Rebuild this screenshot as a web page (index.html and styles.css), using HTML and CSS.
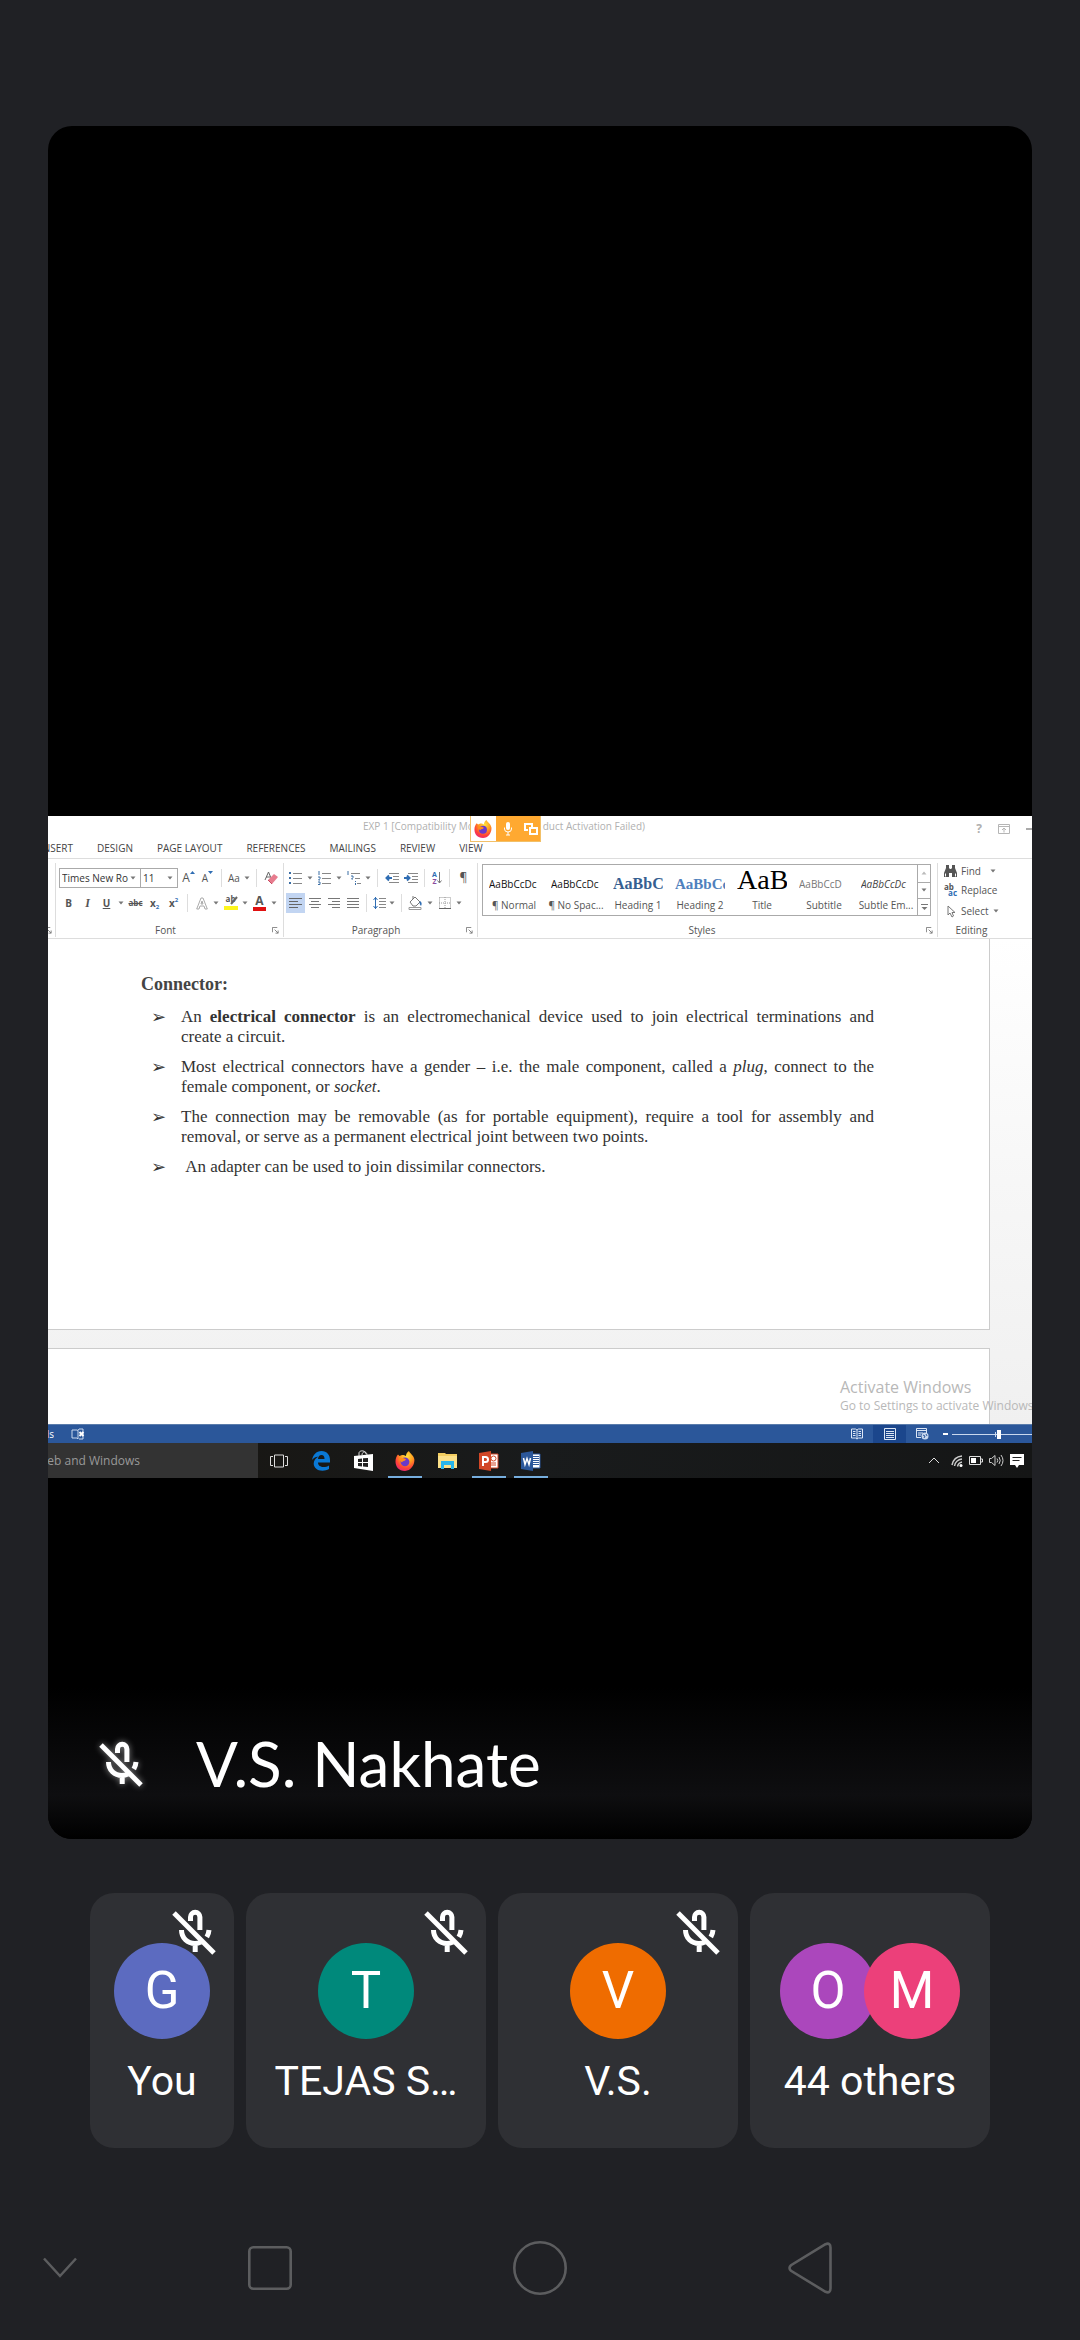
FILE: index.html
```html
<!DOCTYPE html>
<html lang="en">
<head>
<meta charset="utf-8">
<meta name="viewport" content="width=device-width, initial-scale=1">
<title>Meeting</title>
<link rel="stylesheet" href="styles.css">
</head>
<body>
<svg class="sprite" aria-hidden="true">
  <defs>
    <radialGradient id="fox" cx="0.6" cy="0.25" r="0.85"><stop offset="0" stop-color="#ffe23c"/><stop offset="0.4" stop-color="#ff9a1f"/><stop offset="0.72" stop-color="#ff4138"/><stop offset="1" stop-color="#e0208a"/></radialGradient>
  </defs>
  <symbol id="mic-off" viewBox="0 0 44 46">
    <g fill="none" stroke="currentColor" stroke-width="5">
      <path d="M2 4 42 44"/>
      <path d="M18.500 12V8a4.700 4.700 0 0 1 9.400 0V21"/>
      <path d="M9.500 21C9.500 29 15.500 34.500 23 34.500c2 0 4-.5 6-1.500M37 21c-.2 2.500-1 5-2.200 7M23.200 34v9"/>
    </g>
  </symbol>
  <symbol id="caret" viewBox="0 0 6 4"><path d="M0.500 0.500h5l-2.500 3z" fill="#777"/></symbol>
  <symbol id="launch" viewBox="0 0 8 8"><path d="M.5 6V.5H6M3 3l4 4M7 4v3H4" fill="none" stroke="#777"/></symbol>
  <symbol id="firefox" viewBox="0 0 20 20">
    <path d="M3 3.500 4.500 5 7 4c2 0 3 .5 4 1 0-2 1-4 3-5 .3 2 4.500 4 5.300 8 .8 5-3 12-9.300 12S.5 15.500.5 10.500C.5 7.500 1.500 5 3 3.500z" fill="url(#fox)"/>
    <circle cx="10" cy="10.800" r="4.400" fill="#6b39c9"/>
    <path d="M4 7.500c3-1.500 5 0 7 1-1 2-3.500 1-4 3-1-1-2.500-2-3-4z" fill="#ff8a1c"/>
  </symbol>
  <symbol id="lines-left" viewBox="0 0 14 12"><path d="M0 1.500h13M0 4.500h9M0 7.500h13M0 10.500h9" stroke="#666" fill="none"/></symbol>
  <symbol id="lines-center" viewBox="0 0 14 12"><path d="M1 1.500h12M3 4.500h8M1 7.500h12M3 10.500h8" stroke="#777" fill="none"/></symbol>
  <symbol id="lines-right" viewBox="0 0 14 12"><path d="M1 1.500h12M5 4.500h8M1 7.500h12M5 10.500h8" stroke="#777" fill="none"/></symbol>
  <symbol id="lines-full" viewBox="0 0 14 12"><path d="M1 1.500h12M1 4.500h12M1 7.500h12M1 10.500h12" stroke="#777" fill="none"/></symbol>
  <symbol id="bullets" viewBox="0 0 14 14"><path d="M0 2h2M0 7h2M0 12h2" stroke="#3b6ea5" stroke-width="2"/><path d="M4 2.500h9M4 7.500h9M4 12.500h9" stroke="#888"/></symbol>
  <symbol id="numbers" viewBox="0 0 14 14"><path d="M1 0v4M0 6h2v1.500L.5 9H2M0 11h2v2.500H0" stroke="#3b6ea5" fill="none"/><path d="M4 2.500h9M4 7.500h9M4 12.500h9" stroke="#888"/></symbol>
  <symbol id="levels" viewBox="0 0 14 14"><path d="M1 0v4M4 5h2v1.500L4.500 8H6M8.500 10v1m0 1v2" stroke="#3b6ea5" fill="none"/><path d="M4 2.500h9M8 7.500h5M10 12.500h4" stroke="#888"/></symbol>
  <symbol id="outdent" viewBox="0 0 14 12"><path d="M4 1.500h10M8 4.500h6M8 7.500h6M4 10.500h10" stroke="#888"/><path d="M7 6H2M4 3.500 1.500 6 4 8.500" stroke="#2f6db3" stroke-width="2" fill="none"/></symbol>
  <symbol id="indent" viewBox="0 0 14 12"><path d="M4 1.500h10M8 4.500h6M8 7.500h6M4 10.500h10" stroke="#888"/><path d="M0 6h5M3 3.500 5.500 6 3 8.500" stroke="#2f6db3" stroke-width="2" fill="none"/></symbol>
</svg>

<main class="stage">
  <section class="share" aria-label="Shared screen">
    <header class="titlebar">
      <div class="title-text">
        <span>EXP 1 [Compatibility Mo</span>
        <div class="sharing">
          <span class="sharing-app"><svg width="18" height="18"><use href="#firefox"/></svg></span>
          <svg class="sharing-mic" width="8" height="14" viewBox="0 0 8 14"><rect x="2" y="0" width="4" height="8" rx="2" fill="#fff"/><path d="M.5 5.500v1.500a3.500 3 0 0 0 7 0V5.500M4 10v3M2 13h4" stroke="#fff" fill="none"/></svg>
          <svg class="sharing-screen" width="14" height="12" viewBox="0 0 14 12"><path d="M4 7H1V1h7v3M6 5h7v6H6z" fill="none" stroke="#fff" stroke-width="2"/></svg>
        </div>
        <span>duct Activation Failed)</span>
      </div>
      <div class="window-tools">
        <button aria-label="Help">?</button>
        <button aria-label="Ribbon display options"><svg width="12" height="10" viewBox="0 0 12 10"><path d="M.5.5h11v9H.5zM.5 2.500h11M6 8.500V4.500M4 6l2-2 2 2" fill="none" stroke="#b5b5b5"/></svg></button>
        <button aria-label="Minimize"><svg width="12" height="2"><path d="M0 1h12" stroke="#aaa" stroke-width="2"/></svg></button>
      </div>
    </header>

    <nav class="tabs">
      <button>INSERT</button><button>DESIGN</button><button>PAGE LAYOUT</button><button>REFERENCES</button><button>MAILINGS</button><button>REVIEW</button><button>VIEW</button>
    </nav>

    <div class="ribbon">
      <div class="group"><div class="group-name"><svg class="launch" width="7" height="7"><use href="#launch"/></svg></div></div>

      <div class="group font-group">
        <div class="tools">
          <label class="picker picker-font"><select aria-label="Font"><option>Times New Ro</option></select><svg width="6" height="4"><use href="#caret"/></svg></label>
          <label class="picker picker-size"><select aria-label="Font size"><option>11</option></select><svg width="6" height="4"><use href="#caret"/></svg></label>
          <button class="tool grow" aria-label="Grow font">A<svg width="5" height="3" viewBox="0 0 5 3"><path d="M0 3 2.500 0 5 3z" fill="#2f6db3"/></svg></button>
          <button class="tool shrink" aria-label="Shrink font">A<svg width="5" height="3" viewBox="0 0 5 3"><path d="M0 0h5L2.500 3z" fill="#2f6db3"/></svg></button>
          <i class="sep"></i>
          <button class="tool narrow">Aa</button><button class="drop" aria-label="Case"><svg width="6" height="4"><use href="#caret"/></svg></button>
          <i class="sep"></i>
          <button class="tool" aria-label="Clear formatting"><svg width="14" height="14" viewBox="0 0 14 14"><path d="M1 9 4.500 1 7 7M2 6h4" stroke="#666" fill="none"/><path d="M4 9 10 3l4 3-6 7z" fill="#e77c8e"/><path d="M4 9l4 4" stroke="#c9485f"/></svg></button>
        </div>
        <div class="tools">
          <button class="tool bold">B</button><button class="tool italic">I</button><button class="tool under">U</button><button class="drop" aria-label="Underline style"><svg width="6" height="4"><use href="#caret"/></svg></button>
          <button class="tool strike">abc</button><button class="tool bold">x<sub>2</sub></button><button class="tool bold">x<sup>2</sup></button>
          <i class="sep"></i>
          <button class="tool" aria-label="Text effects"><svg width="12" height="13" viewBox="0 0 12 13"><path d="M.7 12 5 1h2l4.300 11H9L8 9H4l-1 3zM5 7h2L6 4z" fill="none" stroke="#aaa"/></svg></button><button class="drop" aria-label="Effects list"><svg width="6" height="4"><use href="#caret"/></svg></button>
          <button class="tool mark-yellow" aria-label="Highlight"><span>ab</span><svg width="14" height="14" viewBox="0 0 14 14"><path d="M13 1 7 8" stroke="#666" stroke-width="2"/><path d="M0 10h14v4H0z" fill="#fdf51c"/></svg></button><button class="drop" aria-label="Highlight colour"><svg width="6" height="4"><use href="#caret"/></svg></button>
          <button class="tool mark-red">A</button><button class="drop" aria-label="Font colour"><svg width="6" height="4"><use href="#caret"/></svg></button>
        </div>
        <div class="group-name"><span>Font</span><svg class="launch" width="7" height="7"><use href="#launch"/></svg></div>
      </div>

      <div class="group para-group">
        <div class="tools">
          <button class="tool" aria-label="Bullets"><svg width="14" height="14"><use href="#bullets"/></svg></button><button class="drop" aria-label="Bullet list"><svg width="6" height="4"><use href="#caret"/></svg></button>
          <button class="tool" aria-label="Numbering"><svg width="14" height="14"><use href="#numbers"/></svg></button><button class="drop" aria-label="Number list"><svg width="6" height="4"><use href="#caret"/></svg></button>
          <button class="tool" aria-label="Multilevel"><svg width="14" height="14"><use href="#levels"/></svg></button><button class="drop" aria-label="Level list"><svg width="6" height="4"><use href="#caret"/></svg></button>
          <i class="sep"></i>
          <button class="tool" aria-label="Decrease indent"><svg width="14" height="12"><use href="#outdent"/></svg></button>
          <button class="tool" aria-label="Increase indent"><svg width="14" height="12"><use href="#indent"/></svg></button>
          <i class="sep"></i>
          <button class="tool narrow sort" aria-label="Sort"><span><b>A</b><b>Z</b></span><svg width="5" height="12" viewBox="0 0 5 12"><path d="M2.500 0v11M.5 8.500l2 2.500 2-2.500" stroke="#777" fill="none"/></svg></button>
          <i class="sep"></i>
          <button class="tool pilcrow">¶</button>
        </div>
        <div class="tools">
          <button class="tool active" aria-label="Align left"><svg width="14" height="12"><use href="#lines-left"/></svg></button>
          <button class="tool" aria-label="Centre"><svg width="14" height="12"><use href="#lines-center"/></svg></button>
          <button class="tool" aria-label="Align right"><svg width="14" height="12"><use href="#lines-right"/></svg></button>
          <button class="tool" aria-label="Justify"><svg width="14" height="12"><use href="#lines-full"/></svg></button>
          <i class="sep"></i>
          <button class="tool narrow" aria-label="Line spacing"><svg width="13" height="14" viewBox="0 0 13 14"><path d="M2.500 1v12M.5 4l2-2.500 2 2.500M.5 10l2 2.500 2-2.500" stroke="#2f6db3" fill="none"/><path d="M6 2.500h7M6 5.500h7M6 8.500h7M6 11.500h7" stroke="#888"/></svg></button><button class="drop" aria-label="Spacing list"><svg width="6" height="4"><use href="#caret"/></svg></button>
          <i class="sep"></i>
          <button class="tool" aria-label="Shading"><svg width="15" height="14" viewBox="0 0 15 14"><path d="M2 6 7 1l5 5-4 4H5zM5 3V0" stroke="#777" fill="none"/><path d="M12 5c2 1 2 3 1 5-1-1-2-3-1-5z" fill="#2f6db3"/><path d="M1 11.500h12v2H1z" fill="#fff" stroke="#999"/></svg></button><button class="drop" aria-label="Shading colour"><svg width="6" height="4"><use href="#caret"/></svg></button>
          <button class="tool" aria-label="Borders"><svg width="12" height="12" viewBox="0 0 12 12"><path d="M.5.5h11v11M.5.5v11M6 0v11M0 6h12" fill="none" stroke="#999" stroke-dasharray="1 1"/><path d="M0 11.500h12" stroke="#666"/></svg></button><button class="drop" aria-label="Border list"><svg width="6" height="4"><use href="#caret"/></svg></button>
        </div>
        <div class="group-name"><span>Paragraph</span><svg class="launch" width="7" height="7"><use href="#launch"/></svg></div>
      </div>

      <div class="group styles-group">
        <div class="gallery">
          <button class="style"><span class="sample">AaBbCcDc</span><span>¶ Normal</span></button>
          <button class="style"><span class="sample">AaBbCcDc</span><span>¶ No Spac...</span></button>
          <button class="style"><span class="sample heading dark">AaBbCc</span><span>Heading 1</span></button>
          <button class="style"><span class="sample heading small light">AaBbCc</span><span>Heading 2</span></button>
          <button class="style"><span class="sample display">AaB</span><span>Title</span></button>
          <button class="style"><span class="sample spaced">AaBbCcD</span><span>Subtitle</span></button>
          <button class="style"><span class="sample slanted">AaBbCcDc</span><span>Subtle Em...</span></button>
          <div class="scroller">
            <button aria-label="Up"><svg width="6" height="4" viewBox="0 0 6 4"><path d="M.5 3.500h5L3 .5z" fill="#bbb"/></svg></button>
            <button aria-label="Down"><svg width="6" height="4"><use href="#caret"/></svg></button>
            <button aria-label="More"><svg width="7" height="7" viewBox="0 0 7 7"><path d="M0 .5h7" stroke="#777"/><path d="M.5 3h6l-3 3z" fill="#777"/></svg></button>
          </div>
        </div>
        <div class="group-name"><span>Styles</span><svg class="launch" width="7" height="7"><use href="#launch"/></svg></div>
      </div>

      <div class="group edit-group">
        <button class="edit"><svg width="13" height="12" viewBox="0 0 13 12"><path d="M2 3V0h3v3l1 1h1l1-1V0h3v3l2 5v4H8V8H5v4H0V8z" fill="#555"/><path d="M1.500 8.500v3M11.500 8.500v3" stroke="#fff"/></svg><span>Find</span><svg class="end" width="6" height="4"><use href="#caret"/></svg></button>
        <button class="edit"><span class="swap"><b>ab</b><b>ac</b></span><span>Replace</span></button>
        <button class="edit"><svg width="13" height="13" viewBox="0 0 13 13"><path d="M4 1v9l2-2 2 4 1.500-1L8 7.500h3z" fill="#fff" stroke="#777"/></svg><span>Select</span><svg width="6" height="4"><use href="#caret"/></svg></button>
        <div class="group-name"><span>Editing</span></div>
      </div>
    </div>

    <div class="canvas">
      <article class="page first">
        <h1>Connector:</h1>
        <ul>
          <li>An <b>electrical connector</b> is an electromechanical device used to join electrical terminations and create&nbsp;a&nbsp;circuit.</li>
          <li>Most electrical connectors have a gender – i.e. the male component, called a <em>plug</em>, connect to the female component, or <em>socket</em>.</li>
          <li>The connection may be removable (as for portable equipment), require a tool for assembly and removal, or serve as a permanent electrical joint between two points.</li>
          <li>&nbsp;An adapter can be used to join dissimilar connectors.</li>
        </ul>
      </article>
      <article class="page second"></article>
      <div class="watermark"><p class="wm-title">Activate Windows</p><p>Go to Settings to activate Windows.</p></div>
    </div>

    <div class="status">
      <span class="words"><span>words</span></span>
      <svg width="14" height="12" viewBox="0 0 14 12"><path d="M6 2H1v8h5l1 1V2.500zM7 2.500 8 1h4v10H8" fill="none" stroke="#c9d8ee"/><path d="M8.500 4l4 4M12.500 4l-4 4" stroke="#fff" stroke-width="2"/></svg>
      <div class="views">
        <button aria-label="Read mode"><svg width="12" height="12" viewBox="0 0 12 12"><path d="M.5 1h4L6 2l1.500-1h4v9h-4L6 11l-1.500-1h-4zM6 2v9M2 3.500h2.500M2 5.500h2.500M2 7.500h2.500M7.500 3.500H10M7.500 5.500H10M7.500 7.500H10" fill="none" stroke="#dce6f5"/></svg></button>
        <button class="active" aria-label="Print layout"><svg width="12" height="12" viewBox="0 0 12 12"><path d="M.5.5h11v11H.5zM2 3.500h8M2 5.500h8M2 7.500h8M2 9.500h8" fill="none" stroke="#dce6f5"/></svg></button>
        <button aria-label="Web layout"><svg width="13" height="12" viewBox="0 0 13 12"><path d="M5 9.500H.5v-9h10V5M.5 2.500h10M2 5h5M2 7h3" fill="none" stroke="#dce6f5"/><circle cx="9" cy="8" r="3.500" fill="#c9d8ee"/><path d="M7 7l2 1-1 2M10 6l1 2" stroke="#2b579a" fill="none"/></svg></button>
      </div>
      <svg class="zoom-out" width="5" height="2"><path d="M0 1h5" stroke="#fff" stroke-width="2"/></svg>
      <svg class="zoom-track" width="80" height="11" viewBox="0 0 80 11"><path d="M0 5.500h80M43.500 3v5" stroke="#c9d8ee" fill="none"/><path d="M45 1h4v9h-4z" fill="#fff"/></svg>
    </div>

    <div class="taskbar">
      <input class="search" type="text" aria-label="Search" value="Search the web and Windows">
      <div class="apps">
        <button aria-label="Task view"><svg width="18" height="14" viewBox="0 0 18 14"><path d="M4.500 1h9v12h-9zM3 2.500H.5v9H3M15 2.500h2.500v9H15" fill="none" stroke="#ddd"/></svg></button>
        <button aria-label="Edge"><svg width="18" height="20" viewBox="0 0 18 20"><path d="M0 9C1 4 4 0 9.500 0 15 0 18 4 18 9v2.500H6c0 3 2.500 4.500 5.500 4.500 2 0 4-.5 5.500-1.500V18c-2 1.300-4 1.700-6.500 1.700C5 19.700 1.700 16.500 1.700 12.500c0-3 2-5.500 4.500-6.800C3.500 5.500 1.500 7 0 9zm6-1h6.500c0-2.500-1-4-3-4S6.300 5.500 6 8z" fill="#0a78d4"/></svg></button>
        <button aria-label="Store"><svg width="19" height="21" viewBox="0 0 19 21"><path d="M0 6 19 4v17L0 18z" fill="#fff"/><path d="M5 6V3c0-3 7-3 7 1M8 5c0-4 5-4 5 0" fill="none" stroke="#ddd"/><path d="M4 9l4-.5v3.500H4zM9 8.300 14 8v4H9zM4 13h4v3.500L4 16zM9 13h5v4l-5-.5z" fill="#222"/></svg></button>
        <button class="open" aria-label="Firefox"><svg width="20" height="20"><use href="#firefox"/></svg></button>
        <button aria-label="Files"><svg width="19" height="17" viewBox="0 0 19 17"><path d="M0 1h7l1 1h11v14H0z" fill="#f2cd60"/><path d="M0 4h19v12H0z" fill="#fbe089"/><path d="M3 17V9h13v8h-3v-4H6v4z" fill="#28b5ea"/></svg></button>
        <button class="open" aria-label="PowerPoint"><svg width="20" height="20" viewBox="0 0 20 20"><path d="M10 3h9v14h-9z" fill="#fff" stroke="#d24726"/><path d="M12 12h5M12 14h5" stroke="#d24726"/><circle cx="14.500" cy="7.500" r="2.500" fill="none" stroke="#d24726"/><path d="M0 2 12 0v20L0 18z" fill="#d24726"/><path d="M4 15V6h2.500a2.500 2.500 0 0 1 0 5H4" fill="none" stroke="#fff" stroke-width="2"/></svg></button>
        <button class="open" aria-label="Word"><svg width="20" height="20" viewBox="0 0 20 20"><path d="M10 3h9v14h-9z" fill="#fff" stroke="#2b579a"/><path d="M12 5.500h6M12 7.500h6M12 9.500h6M12 11.500h6M12 13.500h6" stroke="#2b579a"/><path d="M0 2 12 0v20L0 18z" fill="#2b579a"/><path d="M2.500 7 4 13.500 6 7.500 8 13.500 9.500 7" fill="none" stroke="#fff" stroke-width="1.500"/></svg></button>
      </div>
      <div class="tray">
        <svg class="more" width="12" height="7" viewBox="0 0 12 7"><path d="M1 6l5-5 5 5" fill="none" stroke="#ddd"/></svg>
        <svg width="12" height="12" viewBox="0 0 12 12"><path d="M1 10C2 5 6 1.500 11 1M3.500 11C4 7.500 7 4.500 11 4M6.500 11.500C7 9 8.500 7.500 11 7" fill="none" stroke="#ccc" stroke-width="1.500"/><circle cx="10" cy="10.500" r="1.500" fill="#fff"/></svg>
        <svg width="14" height="9" viewBox="0 0 14 9"><path d="M.5.5h11v8H.5zM12 3h1.500v3H12" fill="none" stroke="#ddd"/><path d="M2 2h5v5H2z" fill="#fff"/></svg>
        <svg width="15" height="13" viewBox="0 0 15 13"><path d="M.5 4.500h2L6 1.500v10L2.500 8.500h-2zM8 4.500q1.500 2 0 4M10 3q2.500 3.500 0 7M12 1q4 5.500 0 11" fill="none" stroke="#ccc"/></svg>
        <svg width="14" height="14" viewBox="0 0 14 14"><path d="M0 0h14v11H9l-2 3-2-3H0z" fill="#fff"/><path d="M2.500 3.500h9M2.500 6.500h7" stroke="#222"/></svg>
      </div>
    </div>
  </section>

  <footer class="caption">
    <svg width="44" height="46"><use href="#mic-off"/></svg>
    <span>V.S. Nakhate</span>
  </footer>
</main>

<section class="people" aria-label="Participants">
  <div class="person self"><span class="avatar indigo">G</span><span class="name">You</span><svg class="muted" width="44" height="46"><use href="#mic-off"/></svg></div>
  <div class="person"><span class="avatar teal">T</span><span class="name">TEJAS S…</span><svg class="muted" width="44" height="46"><use href="#mic-off"/></svg></div>
  <div class="person"><span class="avatar orange">V</span><span class="name">V.S.</span><svg class="muted" width="44" height="46"><use href="#mic-off"/></svg></div>
  <div class="person"><div class="pair"><span class="avatar purple">O</span><span class="avatar pink">M</span></div><span class="name">44 others</span></div>
</section>

<nav class="system-nav">
  <button aria-label="Hide"><svg width="34" height="22" viewBox="0 0 34 22"><path d="M1 1.500 17 19 33 1.500" fill="none" stroke="currentColor" stroke-width="2.500"/></svg></button>
  <button aria-label="Recent apps"><svg width="44" height="44" viewBox="0 0 44 44"><rect x="1.300" y="1.300" width="41.400" height="41.400" rx="4" fill="none" stroke="currentColor" stroke-width="2.600"/></svg></button>
  <button aria-label="Home"><svg width="54" height="54" viewBox="0 0 54 54"><circle cx="27" cy="27" r="25.700" fill="none" stroke="currentColor" stroke-width="2.600"/></svg></button>
  <button aria-label="Back"><svg width="44" height="52" viewBox="0 0 44 52"><path d="M37.500 2.200 3 23.200q-3 2.800 0 5.600L37.500 49.800q5 2 5-3.500V5.700q0-5.500-5-3.500z" fill="none" stroke="currentColor" stroke-width="2.600"/></svg></button>
</nav>
</body>
</html>
```
FILE: styles.css
```css
* { box-sizing: border-box; }

body {
  margin: 0;
  min-height: 100vh;
  padding-top: 126px;
  display: flex;
  flex-direction: column;
  background: #202125;
  color: #fff;
  font-family: Roboto, sans-serif;
}

button, input, select {
  margin: 0;
  padding: 0;
  border: 0;
  background: none;
  color: inherit;
  font: inherit;
}

svg { display: block; flex: none; }
.sprite { position: absolute; width: 0; height: 0; }

/* Main video stage */
.stage {
  flex: 1;
  margin: 0 48px;
  display: grid;
  grid-template-columns: minmax(0, 1fr);
  grid-template-rows: 1fr auto 361px;
  border-radius: 24px;
  overflow: hidden;
  background: #000;
}

.caption {
  grid-row: 3;
  display: flex;
  align-items: flex-end;
  gap: 53px;
  padding: 0 51px 36px;
  background: linear-gradient(#000 58%, #0e0e10 88%, #000);
  font-family: Lato, sans-serif;
  font-size: 62px;
  line-height: 80px;
}
.caption svg { margin-bottom: 16px; filter: drop-shadow(0 0 3px rgba(255, 255, 255, .5)); }

/* Shared word processor window */
.share {
  grid-row: 2;
  overflow: hidden;
  background: #fff;
  color: #555;
  font-family: "Open Sans", "Noto Sans", sans-serif;
  font-size: 10px;
  line-height: 14px;
}

.titlebar {
  display: grid;
  grid-template-columns: 1fr auto 1fr;
  height: 22px;
  color: #b0b0b0;
}
.title-text { grid-column: 2; display: flex; line-height: 20px; margin-right: 72px; white-space: nowrap; }
.sharing {
  width: 71px;
  height: 26px;
  margin-left: -4px;
  margin-right: 2px;
  display: flex;
  align-items: center;
  background: #ffa931;
  border: 1px solid #f2c068;
  border-top: 0;
}
.sharing-app { width: 25px; height: 25px; display: grid; place-items: center; background: #fff; }
.sharing-mic { margin: 0 8px; }
.sharing-screen { margin-left: 4px; }
.window-tools { display: flex; justify-content: flex-end; align-items: center; gap: 16px; margin-right: -6px; font-size: 12px; font-weight: 700; }

.tabs { display: flex; gap: 24px; height: 20px; margin-left: -8px; color: #444; line-height: 20px; }

.ribbon {
  display: grid;
  grid-template-columns: 8fr 228fr 194fr 460fr 67fr 27fr;
  height: 81px;
  padding: 4px 0 1px;
  border-top: 1px solid #ddd;
  border-bottom: 1px solid #ddd;
}
.group { display: flex; flex-direction: column; min-width: 0; border-right: 1px solid #ddd; }
.group:last-child { border-right: 0; }
.font-group { padding-left: 3px; }
.para-group { padding-left: 2px; }
.group-name { margin-top: auto; display: flex; align-items: center; justify-content: flex-end; height: 14px; }
.group-name span { flex: 1; text-align: center; }
.launch { margin-right: 4px; }
.group:first-child .launch { margin-right: 3px; }

.tools { display: flex; align-items: center; height: 20px; margin-top: 5px; }
.tool { width: 19px; height: 20px; flex: none; display: flex; align-items: center; justify-content: center; }
.tool.narrow { width: 16px; }
.tool.active { background: #c2d5f2; }
.drop { width: 10px; height: 20px; flex: none; display: grid; place-items: center; }
.sep { width: 9px; height: 18px; flex: none; background: linear-gradient(#ddd, #ddd) center / 1px 100% no-repeat; }

.picker { display: grid; align-items: center; height: 20px; margin-right: -1px; border: 1px solid #aaa; color: #333; }
.picker select { grid-area: 1 / 1; width: 100%; height: 18px; padding-left: 2px; appearance: none; font-size: 10px; }
.picker svg { grid-area: 1 / 1; justify-self: end; margin-right: 4px; pointer-events: none; }
.picker-font { width: 82px; }
.picker-size { width: 38px; margin-right: 1px; }

.bold { font-weight: 700; }
.bold sub, .bold sup { color: #2f6db3; font-size: 6px; line-height: 6px; }
.bold sub { align-self: flex-end; margin-bottom: 3px; }
.bold sup { align-self: flex-start; margin-top: 4px; }
.italic { font-family: "Liberation Serif", serif; font-style: italic; font-weight: 700; font-size: 12px; }
.under { font-weight: 700; text-decoration: underline; }
.strike { font-size: 8px; font-weight: 700; text-decoration: line-through; }
.grow { font-size: 12px; }
.grow svg, .shrink svg { align-self: flex-start; margin-top: 3px; }
.mark-yellow { font-size: 8px; font-weight: 700; display: grid; place-items: center; }
.mark-yellow > * { grid-area: 1 / 1; }
.mark-yellow span { align-self: start; line-height: 12px; }
.mark-red { width: 13px; height: 16px; margin: 0 3px; border-bottom: 4px solid #e01010; font-size: 12px; font-weight: 700; line-height: 12px; }
.sort span { display: grid; line-height: 7px; font-size: 7px; color: #2f6db3; }
.sort b + b { color: #8a4b9d; }
.pilcrow { font-size: 12px; }

.gallery { display: flex; margin: 1px 6px 0 4px; height: 52px; border: 1px solid #aaa; }
.style { flex: 1; min-width: 0; padding: 0 6px 2px; display: flex; flex-direction: column; justify-content: flex-end; align-items: center; white-space: nowrap; }
.sample { width: 100%; height: 25px; margin-bottom: 3px; overflow: hidden; text-align: left; line-height: 30px; font-size: 10px; color: #111; }
.style span:last-child { line-height: 16px; }
.heading { font-family: "Liberation Serif", serif; font-weight: 700; font-size: 16px; }
.heading.small { font-size: 15px; }
.heading.dark { color: #365f91; }
.heading.light { color: #4f81bd; }
.display { font-family: "Liberation Serif", serif; font-size: 28px; line-height: 22px; color: #000; }
.spaced { color: #777; }
.slanted { font-style: italic; color: #444; }
.scroller { width: 13px; display: grid; grid-template-rows: repeat(3, 1fr); border-left: 1px solid #aaa; }
.scroller button { display: grid; place-items: center; }
.scroller button + button { border-top: 1px solid #aaa; }

.edit-group { padding-left: 6px; }
.edit-group .group-name { padding-right: 6px; }
.edit { display: flex; align-items: center; gap: 4px; height: 20px; margin-top: 1px; }
.edit .end { margin-left: 5px; }
.edit:first-child { height: 16px; margin-top: 0; }
.swap { width: 13px; display: grid; font-size: 8px; line-height: 6px; text-align: left; }
.swap b + b { color: #2f6db3; text-align: right; }

.canvas { position: relative; overflow: hidden; background: linear-gradient(#fff, #f7f7f7 50%, #f0f0f0); }
.page { margin-right: 42px; background: #fff; border: solid #ccc; border-width: 0 1px 1px 0; }
.page.first { min-height: 391px; padding: 35px 115px 20px 93px; }
.page.second { min-height: 76px; margin-top: 18px; border-width: 1px 1px 0 0; }
.page h1, .page ul { font-family: "Liberation Serif", serif; font-size: 17px; line-height: 20px; color: #333; }
.page h1 { margin: 0 0 13px; font-size: 18px; color: #444; }
.page ul { margin: 0; padding: 0 0 0 40px; list-style: none; display: grid; gap: 10px; text-align: justify; }
.page li { position: relative; }
.page li::before { content: "➢"; position: absolute; left: -30px; font-family: "DejaVu Sans", sans-serif; font-size: 18px; }

.watermark { position: absolute; left: 792px; bottom: 9px; color: #b8b8b8; white-space: nowrap; font-size: 12px; line-height: 18px; }
.watermark p { margin: 0; }
.watermark .wm-title { font-size: 16px; line-height: 20px; }

.status { display: flex; align-items: center; height: 19px; background: #2b579a; border-top: 1px solid #5a7cab; color: #fff; }
.words { width: 6px; display: flex; justify-content: flex-end; overflow: hidden; margin-right: 17px; }
.views { display: flex; height: 100%; margin-left: auto; }
.views button { width: 33px; display: grid; place-items: center; }
.views .active { background: #1b468c; }
.zoom-out { margin: 0 4px; }

.taskbar { display: flex; height: 35px; background: linear-gradient(90deg, #17140f, #191b1c 50%, #151616); overflow: hidden; }
.search { width: 290px; margin-left: -80px; padding-right: 118px; background: #333; color: #999; text-align: right; font-size: 12px; }
.apps { display: flex; }
.apps button { width: 42px; display: grid; place-items: center; }
.apps .open { background: linear-gradient(#76aede, #76aede) bottom / 34px 2px no-repeat; }
.tray { margin-left: auto; display: flex; align-items: center; gap: 6px; padding-right: 8px; }
.tray .more { margin-right: 5px; }

/* Participant tiles */
.people { display: flex; gap: 12px; margin: 54px 90px 48px; }
.person {
  position: relative;
  flex: 5 1 0;
  min-width: 0;
  min-height: 255px;
  padding-top: 50px;
  display: flex;
  flex-direction: column;
  align-items: center;
  gap: 16px;
  border-radius: 24px;
  background: #2f3034;
}
.person.self { flex-grow: 3; }
.avatar { width: 96px; height: 96px; border-radius: 50%; display: grid; place-items: center; font-size: 51px; line-height: 96px; }
.pair { display: flex; }
.pair .avatar + .avatar { margin-left: -12px; }
.indigo { background: #5c6bc0; }
.teal { background: #00897b; }
.orange { background: #ef6c00; }
.purple { background: #ab47bc; }
.pink { background: #ec407a; }
.name { font-size: 41px; line-height: 52px; }
.muted { position: absolute; top: 16px; right: 18px; }

/* System navigation */
.system-nav { display: grid; grid-template-columns: 2fr 5fr 4fr 5fr; padding-right: 11.111%; height: 144px; color: #5c5d5f; }
.system-nav button { display: grid; place-items: center; }
```
